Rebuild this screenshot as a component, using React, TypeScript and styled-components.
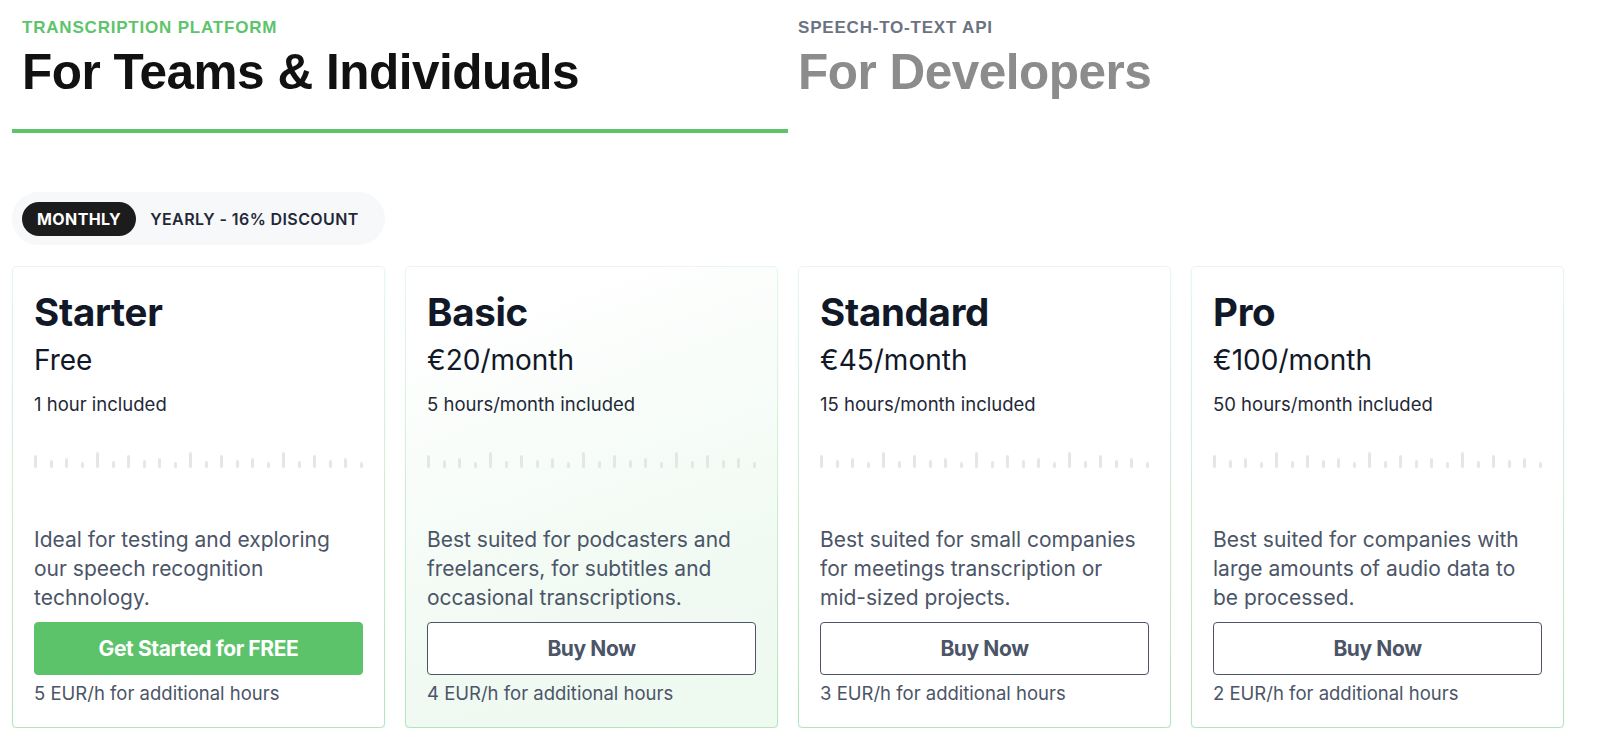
import React from 'react';
import styled, { createGlobalStyle } from 'styled-components';

const GlobalStyle = createGlobalStyle`
  body {
    margin: 0;
    background: #ffffff;
    font-family: Inter, "Noto Sans", sans-serif;
  }
  * { box-sizing: border-box; }
`;

const Page = styled.div`
  width: 1576px;
  padding-left: 12px;
`;

const TabRow = styled.div`
  display: grid;
  grid-template-columns: 776px 1fr;
`;

const Tab = styled.div<{ $active?: boolean }>`
  padding: 18px 10px 28px;
  border-bottom: 4px solid ${p => (p.$active ? '#5ec46b' : 'transparent')};
  font-family: "Liberation Sans", Arial, sans-serif;
`;

const TabLabel = styled.div<{ $active?: boolean }>`
  font-size: 17px;
  line-height: 19px;
  font-weight: 700;
  letter-spacing: 0.8px;
  text-transform: uppercase;
  color: ${p => (p.$active ? '#5ec46b' : '#6b7280')};
`;

const TabTitle = styled.h1<{ $active?: boolean }>`
  margin: 6px 0 0;
  font-size: 49.5px;
  line-height: 58px;
  font-weight: 700;
  letter-spacing: -0.5px;
  color: ${p => (p.$active ? '#111111' : '#8c8c8c')};
`;

const Toggle = styled.div`
  margin-top: 59px;
  width: 373px;
  height: 53px;
  padding: 0 10px;
  display: flex;
  align-items: center;
  gap: 14px;
  background: #f7f8fa;
  border-radius: 27px;
`;

const ToggleOption = styled.div<{ $active?: boolean }>`
  height: 34px;
  display: flex;
  align-items: center;
  padding: 0 ${p => (p.$active ? '15px' : '0')};
  border-radius: 17px;
  background: ${p => (p.$active ? '#1c1c1c' : 'transparent')};
  color: ${p => (p.$active ? '#ffffff' : '#1f2937')};
  font-size: 16px;
  font-weight: ${p => (p.$active ? 700 : 600)};
  letter-spacing: 0.4px;
  text-transform: uppercase;
`;

const CardGrid = styled.div`
  margin-top: 21px;
  display: grid;
  grid-template-columns: repeat(4, 373px);
  gap: 20px;
`;

const Card = styled.div<{ $featured?: boolean }>`
  height: 462px;
  display: flex;
  flex-direction: column;
  padding: 22px 21px 21px;
  border: 1.5px solid transparent;
  border-radius: 5px;
  background:
    ${p =>
      p.$featured
        ? 'linear-gradient(160deg, #ffffff 10%, #f0faf2 70%, #eef9f0 100%)'
        : 'linear-gradient(#ffffff, #ffffff)'} padding-box,
    linear-gradient(to bottom, #e9f7ec, #b3e4bb) border-box;
  box-shadow: 0 1px 1px rgba(94, 196, 107, 0.3);
`;

const PlanName = styled.h2`
  margin: 0;
  font-size: 38.5px;
  line-height: 46px;
  font-weight: 700;
  letter-spacing: -0.3px;
  color: #111827;
`;

const Price = styled.div`
  margin-top: 8px;
  font-size: 28px;
  line-height: 34px;
  color: #111827;
`;

const Included = styled.div`
  margin-top: 14px;
  font-size: 18.5px;
  line-height: 26px;
  color: #1f2937;
`;

const Wave = styled.div`
  margin-top: 35px;
  height: 16px;
  display: flex;
  align-items: flex-end;
  justify-content: space-between;
`;

const WaveBar = styled.span`
  display: block;
  width: 3px;
  border-radius: 1.5px;
  background: #e4e6e9;
`;

const Description = styled.p`
  margin: auto 0 0;
  font-size: 21px;
  line-height: 29px;
  color: #4b5567;
`;

const ActionButton = styled.button<{ $primary?: boolean }>`
  margin-top: 10px;
  height: 53px;
  width: 100%;
  border-radius: 4px;
  font-family: Inter, sans-serif;
  font-size: 21px;
  font-weight: 700;
  letter-spacing: -0.4px;
  cursor: pointer;
  border: ${p => (p.$primary ? '1.5px solid #5cc36a' : '1.5px solid #4b5567')};
  background: ${p => (p.$primary ? '#5cc36a' : '#ffffff')};
  color: ${p => (p.$primary ? '#ffffff' : '#4b5567')};
`;

const Extra = styled.div`
  margin-top: 5px;
  font-size: 18.5px;
  line-height: 26px;
  color: #4b5567;
`;

const barHeights = [13, 8, 10, 6, 16, 7];

const plans = [
  {
    name: 'Starter',
    price: 'Free',
    included: '1 hour included',
    description: 'Ideal for testing and exploring our speech recognition technology.',
    cta: 'Get Started for FREE',
    primary: true,
    extra: '5 EUR/h for additional hours',
  },
  {
    name: 'Basic',
    price: '€20/month',
    included: '5 hours/month included',
    description: 'Best suited for podcasters and freelancers, for subtitles and occasional transcriptions.',
    cta: 'Buy Now',
    featured: true,
    extra: '4 EUR/h for additional hours',
  },
  {
    name: 'Standard',
    price: '€45/month',
    included: '15 hours/month included',
    description: 'Best suited for small companies for meetings transcription or mid-sized projects.',
    cta: 'Buy Now',
    extra: '3 EUR/h for additional hours',
  },
  {
    name: 'Pro',
    price: '€100/month',
    included: '50 hours/month included',
    description: 'Best suited for companies with large amounts of audio data to be processed.',
    cta: 'Buy Now',
    extra: '2 EUR/h for additional hours',
  },
];

const Waveform: React.FC = () => (
  <Wave>
    {Array.from({ length: 22 }).map((_, i) => (
      <WaveBar key={i} style={{ height: barHeights[i % barHeights.length] }} />
    ))}
  </Wave>
);

export default function App() {
  return (
    <>
      <GlobalStyle />
      <Page>
        <TabRow>
          <Tab $active>
            <TabLabel $active>Transcription Platform</TabLabel>
            <TabTitle $active>For Teams &amp; Individuals</TabTitle>
          </Tab>
          <Tab>
            <TabLabel>Speech-to-Text API</TabLabel>
            <TabTitle>For Developers</TabTitle>
          </Tab>
        </TabRow>

        <Toggle>
          <ToggleOption $active>Monthly</ToggleOption>
          <ToggleOption>Yearly - 16% Discount</ToggleOption>
        </Toggle>

        <CardGrid>
          {plans.map(plan => (
            <Card key={plan.name} $featured={plan.featured}>
              <PlanName>{plan.name}</PlanName>
              <Price>{plan.price}</Price>
              <Included>{plan.included}</Included>
              <Waveform />
              <Description>{plan.description}</Description>
              <ActionButton $primary={plan.primary}>{plan.cta}</ActionButton>
              <Extra>{plan.extra}</Extra>
            </Card>
          ))}
        </CardGrid>
      </Page>
    </>
  );
}
